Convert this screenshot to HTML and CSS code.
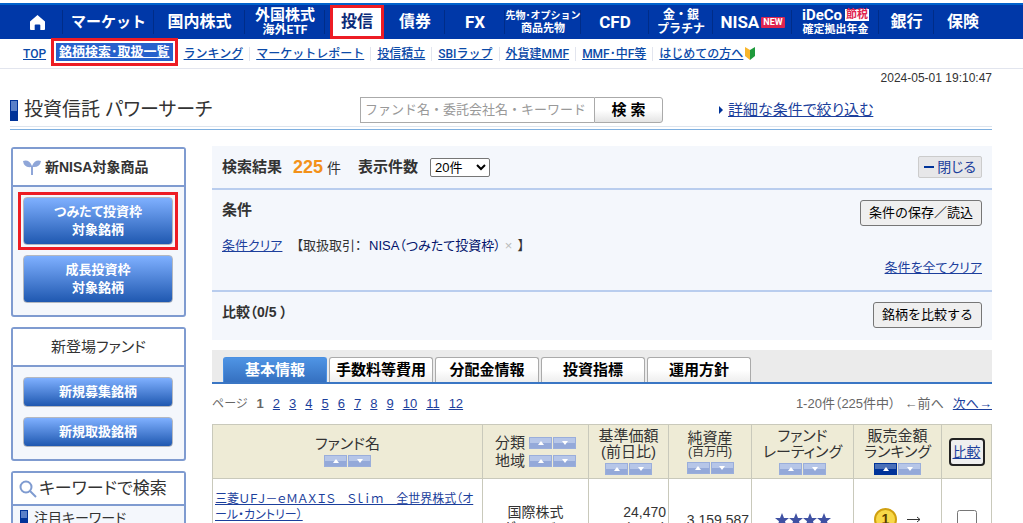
FILE: index.html
```html
<!DOCTYPE html>
<html lang="ja">
<head>
<meta charset="utf-8">
<title>投資信託 パワーサーチ</title>
<link rel="stylesheet" href="styles.css">
</head>
<body>
<svg class="defs" aria-hidden="true">
  <symbol id="up" viewBox="0 0 6 4"><path d="M3 0l3 4H0z"/></symbol>
  <symbol id="down" viewBox="0 0 6 4"><path d="M3 4l3-4H0z"/></symbol>
  <symbol id="star" viewBox="0 0 14 14"><path d="M7 0l2 5h5l-4 3.300 1.500 5.200L7 10.500 2.500 13.500 4 8.300 0 5h5z"/></symbol>
</svg>
<header>
  <nav class="global">
    <a href="#" aria-label="ホーム"><svg class="home" viewBox="0 0 16 16"><path d="M8 0L0 7v8q0 1 1 1h4v-5q0-1 1-1h4q1 0 1 1v5h4q1 0 1-1V7z"/></svg></a>
    <a href="#" class="kana">マーケット</a>
    <a href="#">国内株式</a>
    <a href="#" class="two"><span class="mid">外国株式</span><span class="sub">海外ETF</span></a>
    <a href="#" class="active">投信</a>
    <a href="#">債券</a>
    <a href="#" class="latin">FX</a>
    <a href="#" class="two"><span class="tiny">先物･オプション</span><span class="small">商品先物</span></a>
    <a href="#" class="latin">CFD</a>
    <a href="#" class="two"><span class="sub">金・銀</span><span class="sub">プラチナ</span></a>
    <a href="#" class="latin">NISA<span class="new">NEW</span></a>
    <a href="#" class="two"><span class="mid">iDeCo<span class="tax">節税</span></span><span class="small">確定拠出年金</span></a>
    <a href="#">銀行</a>
    <a href="#">保険</a>
  </nav>
  <nav class="local">
    <a href="#">TOP</a>
    <a href="#" class="current"><span>銘柄検索･取扱一覧</span></a>
    <a href="#">ランキング</a>
    <a href="#">マーケットレポート</a>
    <a href="#">投信積立</a>
    <a href="#">SBIラップ</a>
    <a href="#">外貨建MMF</a>
    <a href="#">MMF･中F等</a>
    <a href="#">はじめての方へ</a>
    <svg class="leaf" viewBox="0 0 10 13"><path fill="#f8b62c" d="M0 0l5 3v10L0 9z"/><path fill="#1f9a3c" d="M10 0L5 3v10l5-4z"/></svg>
  </nav>
</header>
<div class="page">
  <time>2024-05-01 19:10:47</time>
  <div class="title">
    <h1>投資信託 パワーサーチ</h1>
    <form class="search">
      <input type="text" aria-label="検索キーワード" placeholder="ファンド名・委託会社名・キーワード">
      <button type="button">検 索</button>
    </form>
    <a href="#" class="detail">詳細な条件で絞り込む</a>
  </div>
  <div class="columns">
    <aside>
      <section class="box">
        <h2 class="bold"><svg class="sprout" viewBox="0 0 18 15"><path d="M0 1q6-2 9 5 3-7 9-5-1 6-7 6l-1 0v8H8V7Q1 8 0 1z"/></svg>新NISA対象商品</h2>
        <div class="stack">
          <div class="marked"><a href="#" class="pill">つみたて投資枠<br>対象銘柄</a></div>
          <a href="#" class="pill">成長投資枠<br>対象銘柄</a>
        </div>
      </section>
      <section class="box">
        <h2>新登場ファンド</h2>
        <div class="stack">
          <a href="#" class="pill">新規募集銘柄</a>
          <a href="#" class="pill">新規取扱銘柄</a>
        </div>
      </section>
      <section class="box">
        <h2 class="large"><svg class="lens" viewBox="0 0 18 18"><circle cx="7" cy="7" r="5.500"/><path d="M11 11l6 6"/></svg>キーワードで検索</h2>
        <div class="keywords"><h3>注目キーワード</h3></div>
      </section>
    </aside>
    <main>
      <div class="panel">
        <div class="row">
          <b>検索結果</b><span class="count"><strong>225</strong> 件</span>
          <label for="size">表示件数</label>
          <select id="size"><option>20件</option></select>
          <button type="button" class="close"><i></i>閉じる</button>
        </div>
        <div class="row conditions">
          <div>
            <b>条件</b>
            <p><a href="#">条件クリア</a><span>【取扱取引： <em>NISA（つみたて投資枠）</em><small>×</small> 】</span></p>
          </div>
          <div class="side">
            <button type="button" class="plain">条件の保存／読込</button>
            <a href="#">条件を全てクリア</a>
          </div>
        </div>
        <div class="row compare"><b>比較（0/5 ）</b><button type="button" class="plain">銘柄を比較する</button></div>
      </div>
      <div class="tabs">
        <button type="button" class="on">基本情報</button>
        <button type="button">手数料等費用</button>
        <button type="button">分配金情報</button>
        <button type="button">投資指標</button>
        <button type="button">運用方針</button>
      </div>
      <div class="pager">
        <span class="label">ページ</span><b>1</b><a href="#">2</a><a href="#">3</a><a href="#">4</a><a href="#">5</a><a href="#">6</a><a href="#">7</a><a href="#">8</a><a href="#">9</a><a href="#">10</a><a href="#">11</a><a href="#">12</a>
        <span class="range">1-20件（225件中）</span><span>←前へ</span><a href="#">次へ→</a>
      </div>
      <table>
        <colgroup><col><col class="c2"><col class="c3"><col class="c4"><col class="c5"><col class="c6"><col class="c7"></colgroup>
        <thead>
          <tr>
            <th>ファンド名<div class="sort"><button type="button" aria-label="昇順"><svg><use href="#up"/></svg></button><button type="button" aria-label="降順"><svg><use href="#down"/></svg></button></div></th>
            <th><div class="pair">分類<div class="sort"><button type="button" aria-label="昇順"><svg><use href="#up"/></svg></button><button type="button" aria-label="降順"><svg><use href="#down"/></svg></button></div></div><div class="pair">地域<div class="sort"><button type="button" aria-label="昇順"><svg><use href="#up"/></svg></button><button type="button" aria-label="降順"><svg><use href="#down"/></svg></button></div></div></th>
            <th>基準価額<br>(前日比)<div class="sort"><button type="button" aria-label="昇順"><svg><use href="#up"/></svg></button><button type="button" aria-label="降順"><svg><use href="#down"/></svg></button></div></th>
            <th>純資産<span class="unit">(百万円)</span><div class="sort"><button type="button" aria-label="昇順"><svg><use href="#up"/></svg></button><button type="button" aria-label="降順"><svg><use href="#down"/></svg></button></div></th>
            <th>ファンド<br>レーティング<div class="sort"><button type="button" aria-label="昇順"><svg><use href="#up"/></svg></button><button type="button" aria-label="降順"><svg><use href="#down"/></svg></button></div></th>
            <th>販売金額<br>ランキング<div class="sort"><button type="button" class="chosen" aria-label="昇順"><svg><use href="#up"/></svg></button><button type="button" aria-label="降順"><svg><use href="#down"/></svg></button></div></th>
            <th><button type="button" class="cmp">比較</button></th>
          </tr>
        </thead>
        <tbody>
          <tr>
            <td class="name"><a href="#">三菱ＵＦＪ－ｅＭＡＸＩＳ　Ｓｌｉｍ　全世界株式（オ<br>ール・カントリー）</a></td>
            <td>国際株式<br>グローバル</td>
            <td class="num">24,470<br>(+129)</td>
            <td class="num">3,159,587</td>
            <td><svg class="stars" viewBox="0 0 56 14"><use href="#star" width="14" height="14"/><use href="#star" x="14" width="14" height="14"/><use href="#star" x="28" width="14" height="14"/><use href="#star" x="42" width="14" height="14"/></svg></td>
            <td><div class="rank"><span class="medal">1</span><svg class="arrow" viewBox="0 0 14 7"><path d="M0 3.500h13M10 1l3 2.500L10 6"/></svg></div></td>
            <td><input type="checkbox" aria-label="比較に追加"></td>
          </tr>
        </tbody>
      </table>
    </main>
  </div>
</div>
</body>
</html>
```

FILE: styles.css
```css
* { box-sizing: border-box; }
html { scrollbar-width: none; }
body {
  margin: 0;
  padding-top: 3px;
  background: #fff;
  color: #333;
  font: 13px/16px "Liberation Sans", "Noto Sans CJK JP", sans-serif;
  font-feature-settings: "palt";
}
button, input, select { font: inherit; font-feature-settings: inherit; }
h1, h2, h3, p { margin: 0; font-weight: 400; }
a { color: #1c3f9c; }
.defs { position: absolute; width: 0; height: 0; }

.global {
  display: grid;
  grid-template-columns: 51fr 91fr 91fr 80fr 60fr 60fr 60fr 76fr 68fr 64fr 79fr 87fr 55fr 58fr;
  height: 36px;
  padding: 0 31px 0 12px;
  border-top: 2px solid #0062cc;
  background: #0038a8;
}
.global a {
  display: flex;
  align-items: center;
  justify-content: center;
  min-width: 0;
  color: #fff;
  font: 700 16px/16px Roboto, "Noto Sans CJK JP", sans-serif;
  text-decoration: none;
  white-space: nowrap;
  background: linear-gradient(#002c88, #002c88) right center / 1px 24px no-repeat;
}
.global a:last-child { background: none; }
.global .kana { font-size: 15px; }
.global .latin { font-size: 17px; }
.global .two { flex-direction: column; }
.global .mid { display: flex; align-items: center; font-size: 15px; line-height: 15px; }
.global .sub { font-size: 12px; line-height: 14px; }
.global .small { font-size: 11px; line-height: 14px; }
.global .tiny { font-size: 10px; line-height: 13px; }
.global .active { margin: 0 1px 0 5px; border: 3px solid #ed1c24; background: #fff; color: #0a2a78; }
.home { width: 15px; height: 15px; fill: #fff; }
.new { margin-left: 2px; padding: 0 2px; border-radius: 1px; background: #e0244f; font-size: 9px; line-height: 11px; }
.tax { margin-left: 3px; padding: 0 1px; background: #fff; color: #e0244f; font-size: 11px; line-height: 12px; }

.local {
  display: flex;
  align-items: center;
  height: 30px;
  padding-left: 23px;
  border-bottom: 1px solid #e2e5ee;
}
.local a { color: #0b4aa8; font: 500 12px/14px Roboto, "Noto Sans CJK JP", sans-serif; }
.local a + a { margin-left: 6px; padding-left: 6px; border-left: 1px solid #e2e5ee; }
.local a + .current { z-index: 1; margin: -3px 0 0 5px; padding: 2px; border: 3px solid #ed1c24; }
.local .current span { display: block; padding: 1px 3px; background: #2761cc; color: #fff; font-size: 13px; font-weight: 700; line-height: 16px; text-decoration: underline; }
.local .current + a { padding-left: 0; border: 0; }
.leaf { width: 10px; height: 13px; margin-left: 2px; }

.page { padding: 1px 31px 0 10px; }
time { display: block; text-align: right; font-size: 12px; line-height: 16px; }
.title {
  display: flex;
  align-items: center;
  height: 44px;
  padding-top: 5px;
  border-bottom: 1px solid #7fb0e0;
  background: linear-gradient(#dde4ee, #dde4ee) 0 calc(100% - 2px) / 100% 1px no-repeat;
}
h1 { flex: 0 0 350px; display: flex; align-items: center; gap: 6px; font-size: 19px; line-height: 24px; }
h1::before, h3::before { content: ""; width: 6px; height: 19px; border: 1px solid #003399; background: linear-gradient(#5a80c8 50%, #003399 50%); }
.search { display: flex; height: 26px; }
.search input { width: 234px; padding: 0 4px; border: 1px solid #aaa; border-right: 0; font-feature-settings: normal; }
.search input::placeholder { color: #999; }
.search button { width: 69px; border: 1px solid #aaa; border-radius: 0 3px 3px 0; background: linear-gradient(#fff 50%, #e4e4e4); color: #000; font-size: 15px; font-weight: 700; padding: 0; }
.detail { margin-left: 56px; display: flex; align-items: center; gap: 5px; font-size: 15px; }
.detail::before { content: ""; border: 4px solid transparent; border-left-color: #003399; border-right: 0; }

.columns { display: flex; gap: 26px; padding: 16px 0 0 1px; }
aside { flex: 0 0 175px; display: flex; flex-direction: column; gap: 10px; padding-top: 1px; }
.box { border: 2px solid #7f9bd0; border-radius: 3px; background: #f4f7fc; }
.box h2 { display: flex; align-items: center; justify-content: center; height: 38px; border-bottom: 2px solid #7f9bd0; background: #fff; font-size: 15px; }
.box .bold { justify-content: flex-start; gap: 4px; padding-left: 10px; font-weight: 700; font-size: 14px; }
.box .large { justify-content: flex-start; gap: 2px; height: 33px; padding-left: 6px; font-size: 17px; }
.sprout { width: 18px; height: 15px; fill: #8fa6d8; }
.lens { width: 18px; height: 18px; fill: none; stroke: #7f9bd0; stroke-width: 2; }
.stack { display: flex; flex-direction: column; gap: 10px; padding: 10px 11px 12px 10px; }
.pill { display: block; padding: 5px 0; border: 1px solid #b4b8c0; border-radius: 4px; background: linear-gradient(#7fb0ff, #1f58b0); color: #fff; font-size: 13px; font-weight: 700; line-height: 18px; text-align: center; text-decoration: none; }
.marked { margin: -5px; padding: 2px; border: 3px solid #ed1c24; }
.keywords { padding: 4px 7px 10px; }
h3 { display: flex; align-items: center; gap: 6px; font-size: 14px; line-height: 16px; }
h3::before { height: 14px; }

main { flex: 1; min-width: 0; }
.panel { background: #f4f7fc; }
.row { display: flex; align-items: center; min-height: 44px; padding: 0 10px; border-bottom: 2px solid #b9cdee; color: #333; }
.row b, .row label { font-size: 15px; font-weight: 700; }
.compare b { font-size: 14px; }
.count { margin: 0 17px 0 11px; font-size: 14px; }
.count strong { color: #f39119; font-size: 18px; }
select { width: 60px; height: 19px; margin-left: 12px; border: 1px solid #767676; border-radius: 2px; background: #fff; color: #000; }
.close { display: flex; align-items: center; gap: 3px; margin-left: auto; height: 22px; padding: 0 5px; border: 1px solid #ccc; border-radius: 2px; background: #e7e7e9; color: #1c3f9c; font-size: 14px; }
.close i { width: 10px; height: 2px; background: #003399; }
.conditions { align-items: stretch; justify-content: space-between; height: 102px; padding-top: 10px; }
.conditions b, .compare b { line-height: 20px; }
.conditions p { display: flex; gap: 14px; margin-top: 18px; }
.conditions em { margin-left: 4px; color: #00126b; font-style: normal; }
.conditions small { margin: 0 2px 0 4px; color: #bbb; font-size: 13px; }
.side { display: flex; flex-direction: column; align-items: flex-end; gap: 34px; }
.plain { height: 26px; padding: 0 8px; border: 1px solid #767676; border-radius: 3px; background: #efefef; color: #000; font-feature-settings: normal; }
.compare { align-items: flex-start; justify-content: space-between; height: 48px; padding-top: 10px; border: 0; }
.row.compare b { font-size: 14px; }
.tabs { display: flex; gap: 2px; margin-top: 10px; padding: 7px 11px 0; border-bottom: 2px solid #3a76c4; background: #ebebeb; }
.tabs button { width: 104px; height: 25px; padding: 0; border: 1px solid #aaa; border-bottom: 0; border-radius: 3px 3px 0 0; background: linear-gradient(#fff 50%, #eee); color: #000; font-size: 15px; font-weight: 700; line-height: 22px; }
.tabs .on { border-color: #4a90e2; background: linear-gradient(#4f94e4, #3570c0); color: #fff; }
.pager { display: flex; align-items: center; gap: 9px; height: 40px; color: #666; }
.pager .label { font-size: 12px; }
.pager .range { margin-left: auto; }

table { width: 100%; table-layout: fixed; border-collapse: collapse; }
.c2 { width: 106px; }
.c3 { width: 80px; }
.c4 { width: 83px; }
.c5 { width: 102px; }
.c6 { width: 88px; }
.c7 { width: 50px; }
th, td { padding: 0 2px; border: 1px solid #c9c9bb; text-align: center; }
th { height: 54px; background: #eeebd6; font-size: 15px; font-weight: 400; line-height: 16px; }
.unit { display: block; font-size: 12px; line-height: 13px; }
.sort { display: flex; justify-content: center; gap: 1px; padding-top: 3px; }
.sort button { display: flex; align-items: center; justify-content: center; width: 23px; height: 12px; padding: 0; border: 1px solid #9aaedb; background: linear-gradient(#b6c6e8 50%, #94a9d9 50%); }
.sort svg { width: 6px; height: 4px; fill: #fff; }
.sort .chosen { border-color: #003399; background: linear-gradient(#4a70b8 50%, #003399 50%); }
.pair { display: flex; align-items: center; justify-content: center; gap: 4px; line-height: 18px; }
.pair .sort { padding: 0; }
.cmp { height: 28px; padding: 0 2px; border: 2px solid #222; border-radius: 4px; background: #efefef; color: #1c3f9c; font-size: 14px; text-decoration: underline; }
td { height: 82px; font-size: 14px; }
.name { padding-top: 12px; font-size: 12px; text-align: left; vertical-align: top; white-space: nowrap; }
.num { text-align: right; }
.stars { display: block; width: 56px; height: 14px; margin: 0 auto; fill: #3f51a3; }
.rank { display: flex; align-items: center; justify-content: center; gap: 10px; }
.medal { width: 23px; height: 23px; border: 2px solid #d0a010; border-radius: 50%; background: #f8d848; color: #5a3c00; font-weight: 700; line-height: 19px; }
.arrow { width: 14px; height: 7px; fill: none; stroke: #333; }
td input { display: block; width: 20px; height: 20px; margin: 0 auto; }
```
